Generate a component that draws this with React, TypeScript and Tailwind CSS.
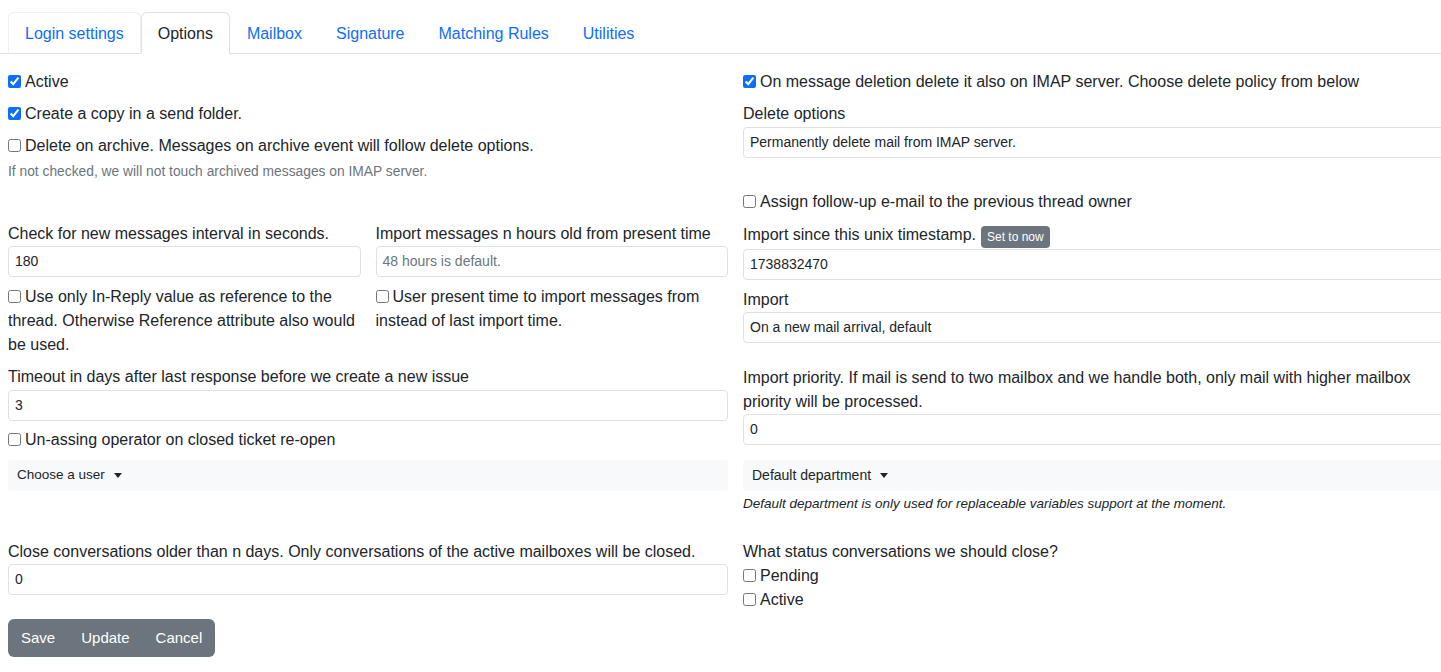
import React from "react";

const font = { fontFamily: '"Liberation Sans", Arial, sans-serif' };

function Check({ checked = false, label, className = "" }: { checked?: boolean; label: React.ReactNode; className?: string }) {
  return (
    <div className={"block leading-6 " + className}>
      <input
        type="checkbox"
        defaultChecked={checked}
        className="m-0 mr-[4px] inline-block h-[13px] w-[13px] align-[-1px] accent-[#0d6efd]"
      />
      {label}
    </div>
  );
}

function Field({ value, placeholder = false }: { value: string; placeholder?: boolean }) {
  return (
    <div
      className={
        "h-[31px] w-full rounded-[4px] border border-[#dee2e6] bg-white px-[6px] text-[14px] leading-[29px] " +
        (placeholder ? "text-[#6c757d]" : "text-[#212529]")
      }
    >
      {value}
    </div>
  );
}

function Dropdown({ label, size = "text-[14px]" }: { label: string; size?: string }) {
  return (
    <div className={"flex h-[31px] w-full items-center rounded-[4px] bg-[#f8f9fa] px-[9px] text-[#212529] " + size}>
      <span>{label}</span>
      <span className="ml-[9px] inline-block h-0 w-0 border-x-[4px] border-t-[5px] border-x-transparent border-t-[#212529]" />
    </div>
  );
}

export default function App() {
  const tabs = ["Login settings", "Options", "Mailbox", "Signature", "Matching Rules", "Utilities"];
  return (
    <div className="h-[672px] w-[1441px] overflow-hidden bg-white text-[16px] text-[#212529]" style={font}>
      <div className="flex border-b border-[#dee2e6] pl-2 pt-3">
        {tabs.map((t) => {
          const active = t === "Options";
          const hover = t === "Login settings";
          return (
            <div
              key={t}
              className={
                "-mb-px rounded-t-[6px] border px-4 pb-[7px] pt-[9px] leading-6 " +
                (active
                  ? "border-[#dee2e6] border-b-white bg-white text-[#212529]"
                  : hover
                  ? "border-[#eef0f2] border-b-[#dee2e6] text-[#0d6efd]"
                  : "border-transparent text-[#0d6efd]")
              }
            >
              {t}
            </div>
          );
        })}
      </div>

      <div className="pl-2 pt-4">
        {/* Row 1 */}
        <div className="flex gap-[15px]">
          <div className="w-[720px] shrink-0">
            <Check checked label="Active" className="mb-2" />
            <Check checked label="Create a copy in a send folder." className="mb-2" />
            <Check label="Delete on archive. Messages on archive event will follow delete options." />
            <div className="mt-1 text-[13.8px] leading-[19px] text-[#6c757d]">
              If not checked, we will not touch archived messages on IMAP server.
            </div>
          </div>
          <div className="w-[720px] shrink-0">
            <Check checked label="On message deletion delete it also on IMAP server. Choose delete policy from below" className="mb-2" />
            <div className="leading-6">Delete options</div>
            <div className="mt-px">
              <Field value="Permanently delete mail from IMAP server." />
            </div>
            <Check label="Assign follow-up e-mail to the previous thread owner" className="mb-2 mt-[32px]" />
          </div>
        </div>

        {/* Row 2 */}
        <div className="flex gap-[15px]">
          <div className="grid w-[720px] shrink-0 grid-cols-2 gap-x-[15px]">
            <div>
              <div className="leading-6">Check for new messages interval in seconds.</div>
              <Field value="180" />
              <Check label="Use only In-Reply value as reference to the thread. Otherwise Reference attribute also would be used." className="mb-2 mt-[8px]" />
            </div>
            <div>
              <div className="leading-6">Import messages n hours old from present time</div>
              <Field value="48 hours is default." placeholder />
              <Check label="User present time to import messages from instead of last import time." className="mt-[8px]" />
            </div>
          </div>
          <div className="w-[720px] shrink-0">
            <div className="flex items-center leading-6">
              <span>Import since this unix timestamp.</span>
              <span className="ml-[5px] mt-[4px] rounded-[4px] bg-[#6c757d] px-[6px] text-[12px] leading-[22px] text-white">Set to now</span>
            </div>
            <div className="mt-px">
              <Field value="1738832470" />
            </div>
            <div className="mt-[8px] leading-6">Import</div>
            <Field value="On a new mail arrival, default" />
          </div>
        </div>

        {/* Row 3 */}
        <div className="flex gap-[15px]">
          <div className="w-[720px] shrink-0">
            <div className="mb-px leading-6">Timeout in days after last response before we create a new issue</div>
            <Field value="3" />
            <Check label="Un-assing operator on closed ticket re-open" className="mb-2 mt-[7px]" />
            <Dropdown label="Choose a user" size="text-[13.5px]" />
          </div>
          <div className="w-[720px] shrink-0">
            <div className="mt-px max-w-[690px] leading-6">
              Import priority. If mail is send to two mailbox and we handle both, only mail with higher mailbox priority will be processed.
            </div>
            <Field value="0" />
            <div className="mt-[15px]">
              <Dropdown label="Default department" />
            </div>
            <div className="mt-[3px] text-[13.5px] italic leading-[19px]">
              Default department is only used for replaceable variables support at the moment.
            </div>
          </div>
        </div>

        {/* Row 4 */}
        <div className="mt-[27px] flex gap-[15px]">
          <div className="w-[720px] shrink-0">
            <div className="leading-6">Close conversations older than n days. Only conversations of the active mailboxes will be closed.</div>
            <Field value="0" />
          </div>
          <div className="w-[720px] shrink-0">
            <div className="leading-6">What status conversations we should close?</div>
            <Check label="Pending" />
            <Check label="Active" />
          </div>
        </div>

        <div className="mt-[7px] inline-flex overflow-hidden rounded-[6px] bg-[#6c757d] text-[15px] text-white">
          <span className="border border-transparent px-3 py-1.5 leading-6">Save</span>
          <span className="border border-transparent px-3 py-1.5 leading-6">Update</span>
          <span className="border border-transparent px-3 py-1.5 leading-6">Cancel</span>
        </div>
      </div>
    </div>
  );
}
